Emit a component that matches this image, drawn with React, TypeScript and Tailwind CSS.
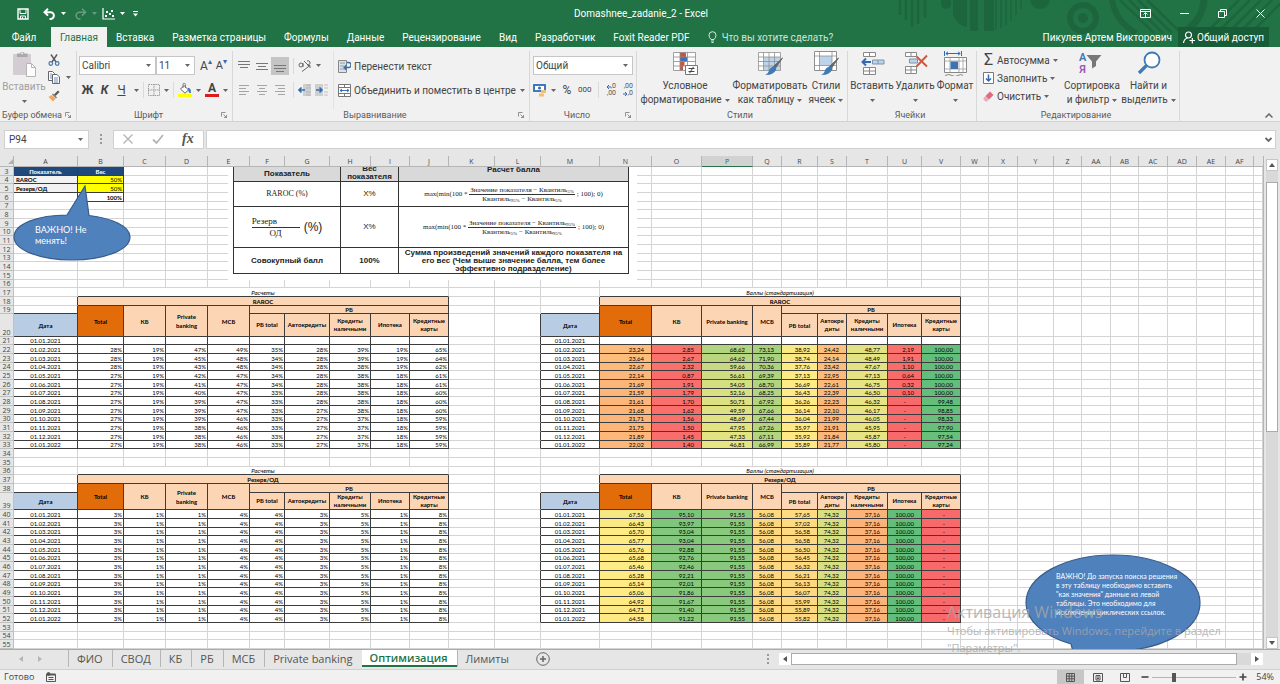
import type { ReactNode } from 'react'

const UI = "font-['Roboto','Open_Sans',sans-serif]"

/* ---------- data ---------- */

const menuTabs = [
  'Вставка',
  'Разметка страницы',
  'Формулы',
  'Данные',
  'Рецензирование',
  'Вид',
  'Разработчик',
  'Foxit Reader PDF',
]

const columns: { name: string; width: string }[] = [
  { name: 'A', width: 'w-[64px]' },
  { name: 'B', width: 'w-[46px]' },
  { name: 'C', width: 'w-[42px]' },
  { name: 'D', width: 'w-[42px]' },
  { name: 'E', width: 'w-[42px]' },
  { name: 'F', width: 'w-[35px]' },
  { name: 'G', width: 'w-[45px]' },
  { name: 'H', width: 'w-[41px]' },
  { name: 'I', width: 'w-[39px]' },
  { name: 'J', width: 'w-[39px]' },
  { name: 'K', width: 'w-[46px]' },
  { name: 'L', width: 'w-[46px]' },
  { name: 'M', width: 'w-[59px]' },
  { name: 'N', width: 'w-[52px]' },
  { name: 'O', width: 'w-[50px]' },
  { name: 'P', width: 'w-[51px]' },
  { name: 'Q', width: 'w-[29px]' },
  { name: 'R', width: 'w-[36px]' },
  { name: 'S', width: 'w-[29px]' },
  { name: 'T', width: 'w-[41px]' },
  { name: 'U', width: 'w-[34px]' },
  { name: 'V', width: 'w-[39px]' },
  { name: 'W', width: 'w-[28px]' },
  { name: 'X', width: 'w-[29px]' },
  { name: 'Y', width: 'w-[36px]' },
  { name: 'Z', width: 'w-[28px]' },
  { name: 'AA', width: 'w-[29px]' },
  { name: 'AB', width: 'w-[28px]' },
  { name: 'AC', width: 'w-[29px]' },
  { name: 'AD', width: 'w-[29px]' },
  { name: 'AE', width: 'w-[29px]' },
  { name: 'AF', width: 'w-[28px]' },
]

const dates = [
  '01.01.2021',
  '01.02.2021',
  '01.03.2021',
  '01.04.2021',
  '01.05.2021',
  '01.06.2021',
  '01.07.2021',
  '01.08.2021',
  '01.09.2021',
  '01.10.2021',
  '01.11.2021',
  '01.12.2021',
  '01.01.2022',
]

const rarocShares: number[][] = [
  [],
  [28, 19, 47, 49, 35, 28, 39, 19, 65],
  [28, 19, 45, 48, 34, 28, 39, 19, 64],
  [28, 19, 43, 48, 34, 28, 38, 19, 62],
  [27, 19, 42, 47, 34, 28, 38, 18, 61],
  [27, 19, 41, 47, 34, 28, 38, 18, 61],
  [27, 19, 40, 47, 33, 28, 38, 18, 60],
  [27, 19, 39, 47, 33, 28, 38, 18, 60],
  [27, 19, 39, 47, 33, 27, 38, 18, 60],
  [27, 19, 39, 46, 33, 27, 37, 18, 59],
  [27, 19, 38, 46, 33, 27, 37, 18, 59],
  [27, 19, 38, 46, 33, 27, 37, 18, 59],
  [27, 19, 38, 46, 33, 27, 37, 18, 59],
]

const rarocScores: number[][] = [
  [],
  [23.24, 2.85, 68.62, 73.13, 38.92, 24.42, 48.77, 2.19, 100],
  [23.64, 2.67, 64.62, 71.9, 38.74, 24.14, 48.49, 1.91, 100],
  [22.67, 2.32, 59.66, 70.36, 37.76, 23.42, 47.67, 1.1, 100],
  [22.14, 0.87, 56.61, 69.39, 37.13, 22.95, 47.13, 0.64, 100],
  [21.69, 1.91, 54.05, 68.7, 36.69, 22.61, 46.75, 0.32, 100],
  [21.59, 1.79, 52.16, 68.25, 36.43, 22.39, 46.5, 0.1, 100],
  [21.61, 1.7, 50.71, 67.92, 36.26, 22.23, 46.32, 0, 99.48],
  [21.68, 1.62, 49.59, 67.66, 36.14, 22.1, 46.17, 0, 98.85],
  [21.71, 1.56, 48.69, 67.44, 36.04, 21.99, 46.05, 0, 98.33],
  [21.75, 1.5, 47.95, 67.26, 35.97, 21.91, 45.95, 0, 97.9],
  [21.89, 1.45, 47.33, 67.11, 35.92, 21.84, 45.87, 0, 97.54],
  [22.02, 1.4, 46.81, 66.99, 35.89, 21.77, 45.8, 0, 97.24],
]

const reserveShares: number[][] = dates.map(() => [3, 1, 1, 4, 4, 3, 5, 1, 8])

const reserveTotal = [67.56, 66.43, 65.7, 65.77, 65.76, 65.68, 65.46, 65.28, 65.14, 65.06, 64.92, 64.71, 64.58]
const reserveKb = [95.1, 93.97, 93.04, 93.04, 92.88, 92.76, 92.46, 92.21, 92.01, 91.86, 91.67, 91.4, 91.22]
const reserveRb = [57.65, 57.02, 56.58, 56.58, 56.5, 56.45, 56.32, 56.21, 56.13, 56.07, 55.99, 55.89, 55.82]
const reserveScores: number[][] = dates.map((_, i) => [
  reserveTotal[i],
  reserveKb[i],
  91.55,
  56.08,
  reserveRb[i],
  74.32,
  37.16,
  100,
  0,
])

const sheets = ['ФИО', 'СВОД', 'КБ', 'РБ', 'МСБ', 'Private banking', 'Оптимизация', 'Лимиты']

/* three-colour scale: red - yellow - green */
function scaleColor(value: number, mid: number) {
  const low = [248, 105, 107]
  const middle = [255, 235, 132]
  const high = [99, 190, 123]
  const t = value < mid ? value / mid : (value - mid) / (100 - mid)
  const from = value < mid ? low : middle
  const to = value < mid ? middle : high
  const rgb = from.map((c, i) => Math.round(c + (to[i] - c) * t))
  return `rgb(${rgb.join(',')})`
}

function formatScore(value: number) {
  return value === 0 ? '-' : value.toFixed(2).replace('.', ',')
}

/* ---------- small drawings ---------- */

function Caret({ className = 'text-[#666]' }: { className?: string }) {
  return (
    <svg viewBox="0 0 5 3" className={`h-[3px] w-[5px] shrink-0 ${className}`} aria-hidden="true">
      <path d="M0 0h5L2.5 3z" fill="currentColor" />
    </svg>
  )
}

function Launcher() {
  return (
    <button aria-label="Параметры группы" className="flex size-[8px] items-center justify-center">
      <svg viewBox="0 0 6 6" className="size-[6px]" fill="none" stroke="#777" strokeWidth="0.8" aria-hidden="true">
        <path d="M0.5 4.5v-4h4M2.5 2.5l3 3M5.5 3v2.5H3" />
      </svg>
    </button>
  )
}

function Divider() {
  return <span className="h-[16px] w-px shrink-0 bg-[#dadada]" />
}

function TitlePattern() {
  return (
    <svg
      viewBox="0 0 384 47"
      className="absolute top-0 right-0 h-[47px] w-[384px]"
      fill="none"
      stroke="#1d663d"
      aria-hidden="true"
    >
      <path d="M4 0v15M10 0v20M16 0v27M22 0v24M29 0v18" strokeWidth="2.5" />
      <path d="M45 0h10v4a5 5 0 0 1-10 0z" fill="#1d663d" stroke="none" />
      <path d="M57 0h14v27q-9-1-14-12z" fill="#1d663d" stroke="none" />
      <path d="M74 0h8v31h-8zM88 0h10v31H88z" fill="#1d663d" stroke="none" />
      <path d="M95 0v30M100 0v30M105 0v28M110 0v25M115 0v21M120 0v15M125 0v9" strokeWidth="1.6" />
      <path d="M134 0h20q-2 9-10 9t-10-9z" fill="#1d663d" stroke="none" />
      <circle cx="187" cy="18" r="13" strokeWidth="6" />
      <circle cx="187" cy="18" r="5" fill="#1d663d" stroke="none" />
      <path d="M216 0q4 22 24 33" strokeWidth="6" />
      <path d="M224 0l34 33M233 0l34 33M242 0l34 33M251 0l32 31" strokeWidth="2.5" />
      <path d="M308 0q-2 22-22 33" strokeWidth="7" />
      <path d="M343 0l-33 33M354 0l-33 33M365 0l-33 33M376 0l-33 33M384 4l-29 29" strokeWidth="2.5" />
    </svg>
  )
}

function LinesIcon({ d }: { d: string }) {
  return (
    <svg viewBox="0 0 12 12" className="size-[12px]" stroke="currentColor" fill="none" aria-hidden="true">
      <path d={d} />
    </svg>
  )
}

function PasteIcon() {
  return (
    <svg viewBox="0 0 24 26" className="h-[26px] w-[24px]" aria-hidden="true">
      <rect x="1" y="3" width="18" height="21" rx="1" fill="#d3cdd3" />
      <path d="M5 2.500h3a2.500 2.500 0 0 1 4.500 0h3V6H5z" fill="#a9a9a9" />
      <circle cx="10.200" cy="2.600" r="1" fill="#f1f1f1" />
      <path d="M14.500 12.500h5l4 4v9h-9z" fill="#fdfdfd" stroke="#b5b5b5" />
      <path d="M19.500 12.500v4h4" fill="none" stroke="#b5b5b5" />
    </svg>
  )
}

function CutIcon() {
  return (
    <svg viewBox="0 0 12 12" className="size-[12px]" fill="none" aria-hidden="true">
      <path d="M3 0.500l5 7.500M9 0.500L4 8" stroke="#5a5a5a" strokeWidth="1.400" />
      <circle cx="2.800" cy="9.500" r="1.800" stroke="#4472b0" strokeWidth="1.200" />
      <circle cx="9.200" cy="9.500" r="1.800" stroke="#4472b0" strokeWidth="1.200" />
    </svg>
  )
}

function CopyIcon() {
  return (
    <svg viewBox="0 0 12 13" className="h-[13px] w-[12px]" aria-hidden="true">
      <path d="M0.500 0.500h4l2 2v7h-6z" fill="#fff" stroke="#666" />
      <path d="M4.500 3.500h4.500l2.500 2.500v6.500h-7z" fill="#fff" stroke="#666" />
      <path d="M6 7h4M6 9h4M6 11h4" stroke="#4472b0" strokeWidth="0.800" />
      <path d="M2 3h2M2 5h2M2 7h2" stroke="#4472b0" strokeWidth="0.800" />
    </svg>
  )
}

function BrushIcon() {
  return (
    <svg viewBox="0 0 12 12" className="size-[12px]" aria-hidden="true">
      <path d="M10 0.500l1.500 1.500-4 4-1.500-1.500z" fill="#555" />
      <path d="M5 3.500l4 4-1 1-4-4z" fill="#7a7a7a" />
      <path d="M3.800 5l3.800 3.800-2.600 2.700L0.500 7z" fill="#f0a860" />
    </svg>
  )
}

function BordersIcon() {
  return (
    <svg viewBox="0 0 12 12" className="size-[12px]" fill="none" aria-hidden="true">
      <path d="M0.500 0.500h11v11h-11zM6 0v12M0 6h12" stroke="#9a9a9a" strokeDasharray="1.500 0.800" />
    </svg>
  )
}

function FillIcon() {
  return (
    <svg viewBox="0 0 14 14" className="size-[14px]" aria-hidden="true">
      <path d="M6 2.500l4.500 4.500-3.500 3.200L2.500 6z" fill="#fff" stroke="#666" />
      <path d="M5 5V1.500a1.200 1.200 0 0 1 2.400 0V5" fill="none" stroke="#666" strokeWidth="0.800" />
      <path d="M10.500 5q2.500 1 1.700 5-1.700-1-1.700-5z" fill="#4472b0" stroke="#4472b0" />
      <path d="M0 11h14v3H0z" fill="#ffff00" />
    </svg>
  )
}

function OrientationIcon() {
  return (
    <svg viewBox="0 0 14 12" className="h-[12px] w-[14px]" fill="none" stroke="#666" aria-hidden="true">
      <path d="M1 5q0-2 2-2t2 2-2 2-2-2M5 3v4M6 1l4 4M9 1q2-1 3 1t-2 3" />
      <path d="M4 11.500l8-6M9.500 5.500H12V8" />
    </svg>
  )
}

function WrapIcon() {
  return (
    <svg viewBox="0 0 13 13" className="size-[13px]" fill="none" aria-hidden="true">
      <path d="M0.500 0.500h8v12h-8z" fill="#d6e3f1" stroke="#888" />
      <path d="M2 3h5M2 6h4M2 9h5" stroke="#888" strokeWidth="0.800" />
      <path d="M9 2.500h1.500a2 2 0 0 1 0 5H6.500M8.500 5L6 7.500 8.500 10" stroke="#3a6fb0" strokeWidth="1.300" />
    </svg>
  )
}

function MergeIcon() {
  return (
    <svg viewBox="0 0 13 13" className="size-[13px]" fill="none" aria-hidden="true">
      <path d="M0.500 0.500h12v12h-12z" fill="#fff" stroke="#777" />
      <path d="M0.500 3.500h12M0.500 9.500h12M6.500 0.500v3M6.500 9.500v3" stroke="#777" />
      <path d="M2 6.500h9M4 5L2 6.500 4 8M9 5l2 1.500L9 8" stroke="#3a6fb0" />
    </svg>
  )
}

function IndentIcon({ flip = false }: { flip?: boolean }) {
  return (
    <svg viewBox="0 0 13 12" className="h-[12px] w-[13px]" fill="none" aria-hidden="true">
      <rect x={flip ? 0 : 5} y="0" width="8" height="12" fill="#cfcfcf" />
      <path d={flip ? 'M1 6h6M4.500 3.500L7 6 4.500 8.500' : 'M7 6H1M3.500 3.500L1 6l2.500 2.500'} stroke="#2f6cb3" strokeWidth="1.600" />
      <path d={flip ? 'M9 1h4M9 4h4M9 8h4M9 11h4' : 'M8 1h5M8 4h5M8 8h5M8 11h5'} stroke="#aaa" strokeWidth="0.700" />
    </svg>
  )
}

function MoneyIcon() {
  return (
    <svg viewBox="0 0 14 13" className="h-[13px] w-[14px]" fill="none" aria-hidden="true">
      <rect x="1" y="1" width="11" height="6" fill="#fff" stroke="#2f6cb3" strokeWidth="1.800" />
      <circle cx="6.500" cy="4" r="1.500" fill="#2f6cb3" />
      <path d="M8 6h5v3H8zM6 9.500h5v3H6z" fill="#f2c078" />
    </svg>
  )
}

function DecimalArrow({ d }: { d: string }) {
  return (
    <svg viewBox="0 0 5 4" className="h-[4px] w-[5px]" fill="none" stroke="#2f6cb3" aria-hidden="true">
      <path d={d} />
    </svg>
  )
}

function DecimalIcon({ grow = false }: { grow?: boolean }) {
  return (
    <span className="flex flex-col items-end text-[7px] leading-[7px] text-[#555]">
      <span className="flex items-center">
        {grow && <DecimalArrow d="M5 2H1M3 0L1 2l2 2" />}
        {grow ? ',0' : ',00'}
      </span>
      <span className="flex items-center">
        {!grow && <DecimalArrow d="M0 2h4M2 0l2 2-2 2" />}
        {grow ? ',00' : ',0'}
      </span>
    </span>
  )
}

function ConditionalIcon() {
  return (
    <svg viewBox="0 0 26 25" className="h-[25px] w-[26px]" fill="none" aria-hidden="true">
      <path d="M1.500 1.500h22v18h-22z" fill="#fff" />
      <path d="M8 1.500h6v4.500H8zM8 10.500h4.500V15H8zM8 15h3v4.500H8z" fill="#d0513c" />
      <path d="M8 6h7v4.500H8z" fill="#3f72b0" />
      <path d="M1.500 1.500h22v18h-22zM1.500 6h22M1.500 10.500h22M1.500 15h22M8 1.500v18M15.500 1.500v18" stroke="#8a8a8a" strokeWidth="0.800" />
      <path d="M13.500 14.500h12v9h-12z" fill="#fff" stroke="#777" />
      <path d="M16.500 17.500h6M16.500 20.500h6M21.500 15.800l-4 6.500" stroke="#444" />
    </svg>
  )
}

function StyleBrush() {
  return (
    <>
      <path d="M25.500 7l-7 10-2-1.500z" fill="#666" stroke="#666" />
      <path d="M17 15.500q3 1 2 3.500-3 5.500-11 5 3.500-1.500 4-5 2-3.500 5-3.500z" fill="#3f7ab8" />
    </>
  )
}

function FormatTableIcon() {
  return (
    <svg viewBox="0 0 26 25" className="h-[25px] w-[26px]" fill="none" aria-hidden="true">
      <path d="M1.500 1.500h22v18h-22z" fill="#fff" />
      <path d="M6.500 6h17v13.500h-17z" fill="#bcd3ea" />
      <path d="M1.500 1.500h22v18h-22zM1.500 6h22M1.500 10.500h22M1.500 15h22M6.500 1.500v18M12 1.500v18M17.500 1.500v18" stroke="#8f8f8f" strokeWidth="0.800" />
      <StyleBrush />
    </svg>
  )
}

function CellStylesIcon() {
  return (
    <svg viewBox="0 0 26 25" className="h-[25px] w-[26px]" fill="none" aria-hidden="true">
      <path d="M1.500 0.500h22v19h-22z" fill="#fff" stroke="#8f8f8f" />
      <path d="M6.500 5h12.500v9.500H6.500z" fill="#bcd3ea" />
      <path d="M1.500 5h22M1.500 14.500h22M6.500 0.500v19M19 0.500v19" stroke="#8f8f8f" strokeWidth="0.800" />
      <StyleBrush />
    </svg>
  )
}

function InsertCellsIcon() {
  return (
    <svg viewBox="0 0 26 25" className="h-[25px] w-[26px]" fill="none" aria-hidden="true">
      <path d="M4.500 1.500h12v4h-12zM10.500 1.500v4M4.500 16.500h12v7h-12zM10.500 16.500v7M4.500 20h12" fill="#fff" stroke="#888" />
      <path d="M13.500 9h11.500v4H13.500zM19 9v4" fill="#bcd3ea" stroke="#7f93a8" />
      <path d="M12 11H3.500M7 7.500L3.500 11 7 14.500" stroke="#2f6cb3" strokeWidth="2" />
    </svg>
  )
}

function DeleteCellsIcon() {
  return (
    <svg viewBox="0 0 26 25" className="h-[25px] w-[26px]" fill="none" aria-hidden="true">
      <path d="M3.500 1.500h11v4h-11zM9 1.500v4M3.500 15.500h11v7h-11zM9 15.500v7M3.500 19h11" fill="#fff" stroke="#888" />
      <path d="M7.500 8h8v4h-8z" fill="#bcd3ea" stroke="#7f93a8" />
      <path d="M14.500 5.500l10.500 10M25 4.500l-10.500 11" stroke="#d4573e" strokeWidth="2" />
    </svg>
  )
}

function FormatCellsIcon() {
  return (
    <svg viewBox="0 0 26 25" className="h-[25px] w-[26px]" fill="none" aria-hidden="true">
      <path d="M2.500 0v5M19.500 0v5M4 2.500h14M6 0.800L3.800 2.500 6 4.200M16 0.800l2.200 1.700L16 4.200" stroke="#2f6cb3" />
      <path d="M2.500 6.500h22v15h-22z" fill="#fff" stroke="#888" />
      <path d="M2.500 10h22M2.500 18h22M8 6.500v15M17 6.500v15M21 6.500v15" stroke="#999" strokeWidth="0.800" />
      <path d="M8.500 10.500h7.500v7.500H8.500z" fill="#3f72b0" />
      <path d="M3 24.500q4-2 7 0t6 0 5 0" stroke="#888" />
    </svg>
  )
}

function SortIcon() {
  return (
    <span className="flex h-[25px] w-[26px] items-center">
      <span className="flex flex-col text-[11px] leading-[12px] font-semibold">
        <span className="text-[#3f72b0]">А</span>
        <span className="text-[#9a57b5]">Я</span>
      </span>
      <svg viewBox="0 0 16 15" className="mb-1 h-[15px] w-[16px]" aria-hidden="true">
        <path d="M0.500 1h15L10 7.500V12l-4 2.500v-7z" fill="#777" />
      </svg>
    </span>
  )
}

function FindIcon() {
  return (
    <svg viewBox="0 0 26 25" className="h-[25px] w-[26px]" fill="none" aria-hidden="true">
      <circle cx="16" cy="9" r="7.500" fill="#fff" stroke="#3f7ab8" strokeWidth="1.800" />
      <path d="M10.500 14.500L3 22" stroke="#3f7ab8" strokeWidth="3.200" />
    </svg>
  )
}

/* ---------- ribbon ---------- */

function Group({
  label,
  width,
  launcher = false,
  children,
}: {
  label: string
  width: string
  launcher?: boolean
  children: ReactNode
}) {
  return (
    <section aria-label={label} className={`flex shrink-0 flex-col pt-[4px] ${width}`}>
      <div className="flex flex-1 border-r border-[#d8d8d8]">{children}</div>
      <div className="flex h-[12px] items-center border-r border-[#d8d8d8] pr-1 text-[9px] leading-[12px] text-[#5c5c5c]">
        <span className="flex-1 text-center whitespace-nowrap">{label}</span>
        {launcher && <Launcher />}
      </div>
    </section>
  )
}

function BigButton({
  icon,
  lines,
  width,
  className = 'text-[#444]',
}: {
  icon: ReactNode
  lines: string[]
  width: string
  className?: string
}) {
  return (
    <button
      className={`flex flex-col items-center self-start text-[10px] leading-[14px] whitespace-nowrap ${width} ${className}`}
    >
      {icon}
      <span className="mt-[3px]">{lines[0]}</span>
      <span className="flex h-[14px] items-center gap-[3px]">
        {lines[1]}
        <Caret />
      </span>
    </button>
  )
}

function Combo({ label, value, width }: { label: string; value: string; width: string }) {
  return (
    <span className={`flex h-[19px] items-center border border-[#c6c6c6] bg-white pr-1 ${width}`}>
      <select
        aria-label={label}
        defaultValue={value}
        className="min-w-0 flex-1 appearance-none bg-transparent pl-[2px] text-[10px] text-[#444] outline-none"
      >
        <option>{value}</option>
      </select>
      <Caret />
    </span>
  )
}

function SmallButton({ icon, label, caret = true }: { icon: ReactNode; label: string; caret?: boolean }) {
  return (
    <button className="flex h-[18px] items-center gap-[3px] text-[10px] whitespace-nowrap text-[#444]">
      {icon}
      {label}
      {caret && <Caret />}
    </button>
  )
}

function Ribbon() {
  return (
    <div className="flex h-[75px] border-b border-[#d2d2d2] bg-[#f1f1f1]">
      <Group label="Буфер обмена" width="w-[77px]" launcher>
        <BigButton icon={<PasteIcon />} lines={['Вставить', '']} width="w-[48px]" className="text-[#a0a0a0]" />
        <div className="flex flex-col gap-[5px] pt-[2px]">
          <button aria-label="Вырезать" className="flex h-[13px] items-center">
            <CutIcon />
          </button>
          <button aria-label="Копировать" className="flex h-[13px] items-center gap-[6px]">
            <CopyIcon />
            <Caret />
          </button>
          <button aria-label="Формат по образцу" className="flex h-[13px] items-center">
            <BrushIcon />
          </button>
        </div>
      </Group>

      <Group label="Шрифт" width="w-[156px]" launcher>
        <div className="flex flex-1 flex-col gap-[5px] pt-[5px] pl-[2px]">
          <div className="flex items-center">
            <Combo label="Шрифт" value="Calibri" width="w-[77px]" />
            <Combo label="Размер шрифта" value="11" width="w-[39px]" />
            <button aria-label="Увеличить размер" className="ml-[5px] flex text-[12px] leading-[14px] text-[#444]">
              A<span className="text-[8px] leading-[6px] text-[#2f6cb3]">▴</span>
            </button>
            <button aria-label="Уменьшить размер" className="ml-[4px] flex text-[11px] leading-[14px] text-[#444]">
              A<span className="text-[8px] leading-[6px] text-[#2f6cb3]">▾</span>
            </button>
          </div>
          <div className="flex h-[20px] items-center gap-[4px] text-[12px] text-[#444]">
            <span className="flex">
              <button className="w-[17px] font-bold">Ж</button>
              <button className="w-[17px] font-bold italic">К</button>
              <button className="w-[17px] underline">Ч</button>
            </span>
            <Caret />
            <Divider />
            <button aria-label="Границы">
              <BordersIcon />
            </button>
            <Caret />
            <Divider />
            <button aria-label="Цвет заливки">
              <FillIcon />
            </button>
            <Caret />
            <button
              aria-label="Цвет текста"
              className="flex h-[14px] w-[14px] flex-col items-center border-b-[3px] border-[#e01b1b] leading-[11px] font-bold"
            >
              A
            </button>
            <Caret />
          </div>
        </div>
      </Group>

      <Group label="Выравнивание" width="w-[297px]" launcher>
        <div className="flex flex-col gap-[5px] pt-[5px] pl-[2px] text-[#777]">
          <div className="flex h-[19px] items-center">
            <button aria-label="По верхнему краю" className="px-[3px]">
              <LinesIcon d="M0 1.500h12M0 4.500h12M2 7.500h8" />
            </button>
            <button aria-label="По середине" className="px-[3px]">
              <LinesIcon d="M0 3.500h12M2 6.500h8M0 9.500h12" />
            </button>
            <button aria-label="По нижнему краю" className="bg-[#c5c5c5] px-[3px] py-[3px]">
              <LinesIcon d="M0 5.500h12M0 8.500h12M2 11.500h8" />
            </button>
            <span className="mx-[4px] flex">
              <Divider />
            </span>
            <button aria-label="Ориентация" className="flex items-center gap-[4px]">
              <OrientationIcon />
              <Caret />
            </button>
          </div>
          <div className="flex h-[19px] items-center">
            <button aria-label="По левому краю" className="px-[3px] text-[#a5a5a5]">
              <LinesIcon d="M1 1.500h10M1 4.500h7M1 7.500h10M1 10.500h7" />
            </button>
            <button aria-label="По центру" className="px-[3px] text-[#a5a5a5]">
              <LinesIcon d="M1 1.500h10M3 4.500h6M1 7.500h10M3 10.500h6" />
            </button>
            <button aria-label="По правому краю" className="px-[3px] text-[#a5a5a5]">
              <LinesIcon d="M1 1.500h10M4 4.500h7M1 7.500h10M4 10.500h7" />
            </button>
            <span className="mx-[4px] flex">
              <Divider />
            </span>
            <button aria-label="Уменьшить отступ">
              <IndentIcon />
            </button>
            <button aria-label="Увеличить отступ" className="ml-[4px]">
              <IndentIcon flip />
            </button>
          </div>
        </div>
        <div className="ml-[5px] flex flex-1 flex-col gap-[6px] border-l border-[#e2e2e2] pt-[6px] pr-[4px] pl-[4px]">
          <SmallButton icon={<WrapIcon />} label="Перенести текст" caret={false} />
          <button className="flex h-[18px] items-center gap-[3px] text-[10px] whitespace-nowrap text-[#444]">
            <MergeIcon />
            <span className="flex-1 text-left">Объединить и поместить в центре</span>
            <Caret />
          </button>
        </div>
      </Group>

      <Group label="Число" width="w-[107px]" launcher>
        <div className="flex flex-1 flex-col gap-[5px] px-[3px] pt-[5px]">
          <Combo label="Числовой формат" value="Общий" width="w-full" />
          <div className="flex h-[20px] items-center justify-between text-[#444]">
            <button aria-label="Финансовый формат" className="flex items-center gap-[4px]">
              <MoneyIcon />
              <Caret />
            </button>
            <button className="text-[12px]">%</button>
            <button className="text-[8px]">000</button>
            <Divider />
            <button aria-label="Увеличить разрядность">
              <DecimalIcon grow />
            </button>
            <button aria-label="Уменьшить разрядность">
              <DecimalIcon />
            </button>
          </div>
        </div>
      </Group>

      <Group label="Стили" width="w-[211px]">
        <BigButton icon={<ConditionalIcon />} lines={['Условное', 'форматирование']} width="w-[96px]" />
        <BigButton icon={<FormatTableIcon />} lines={['Форматировать', 'как таблицу']} width="w-[74px]" />
        <BigButton icon={<CellStylesIcon />} lines={['Стили', 'ячеек']} width="w-[38px]" />
      </Group>

      <Group label="Ячейки" width="w-[129px]">
        <BigButton icon={<InsertCellsIcon />} lines={['Вставить', '']} width="w-[48px]" />
        <BigButton icon={<DeleteCellsIcon />} lines={['Удалить', '']} width="w-[38px]" />
        <BigButton icon={<FormatCellsIcon />} lines={['Формат', '']} width="w-[42px]" />
      </Group>

      <Group label="Редактирование" width="w-[203px]">
        <div className="flex w-[87px] flex-col pl-[6px]">
          <SmallButton icon={<span className="w-[11px] text-[16px] leading-[16px]">Σ</span>} label="Автосумма" />
          <SmallButton
            icon={
              <svg viewBox="0 0 11 12" className="h-[12px] w-[11px]" fill="none" aria-hidden="true">
                <path d="M0.500 0.500h10v11h-10z" fill="#fff" stroke="#777" />
                <path d="M5.500 2.500v6.500M3 6.500L5.500 9 8 6.500" stroke="#2f6cb3" strokeWidth="1.500" />
              </svg>
            }
            label="Заполнить"
          />
          <SmallButton
            icon={
              <svg viewBox="0 0 11 11" className="size-[11px]" aria-hidden="true">
                <path d="M7 0.500L10.500 4 6 8.500 2.500 5z" fill="#e0697f" />
                <path d="M2.500 5L6 8.500 4 10.500H2.500L0.500 8.500V7z" fill="#f0a9b5" />
              </svg>
            }
            label="Очистить"
          />
        </div>
        <BigButton icon={<SortIcon />} lines={['Сортировка', 'и фильтр']} width="w-[56px]" />
        <BigButton icon={<FindIcon />} lines={['Найти и', 'выделить']} width="w-[57px]" />
      </Group>

      <div className="flex flex-1 items-end justify-end pr-[7px] pb-[3px]">
        <button aria-label="Свернуть ленту">
          <svg viewBox="0 0 8 5" className="h-[5px] w-[8px]" fill="none" stroke="#666" strokeWidth="1.500" aria-hidden="true">
            <path d="M0.500 4.500L4 1l3.500 3.500" />
          </svg>
        </button>
      </div>
    </div>
  )
}

/* ---------- title and menu ---------- */

function TitleBar() {
  return (
    <header className="relative bg-[#217346] text-white">
      <TitlePattern />
      <div className="relative flex h-[27px] items-center">
        <div className="flex flex-1 items-center pl-[17px]">
          <button aria-label="Сохранить" className="mr-[14px]">
            <svg viewBox="0 0 12 12" className="size-[12px]" fill="none" stroke="#fff" aria-hidden="true">
              <path d="M1 1h10v10H1z" strokeWidth="1.400" />
              <path d="M3 1v4.500h6V1M3.500 11V8h5v3M5.500 9v2" />
            </svg>
          </button>
          <button aria-label="Отменить" className="flex items-center gap-[5px]">
            <svg viewBox="0 0 13 12" className="h-[12px] w-[13px]" fill="none" stroke="#fff" strokeWidth="2" aria-hidden="true">
              <path d="M5 0.800L1.500 4.200 5 7.600M2 4.200h5.500a3.300 3.300 0 0 1 0 6.800H6.500" />
            </svg>
            <Caret className="text-white" />
          </button>
          <button aria-label="Вернуть" className="ml-[8px] flex items-center gap-[5px] opacity-30">
            <svg viewBox="0 0 13 12" className="h-[12px] w-[13px]" fill="none" stroke="#fff" strokeWidth="1.600" aria-hidden="true">
              <path d="M8 0.800l3.500 3.400L8 7.600M11 4.200H5.500a3.300 3.300 0 0 0 0 6.800h1" />
            </svg>
            <Caret className="text-white" />
          </button>
          <button aria-label="Точечная диаграмма" className="ml-[5px] flex items-center gap-[5px]">
            <svg viewBox="0 0 13 12" className="h-[12px] w-[13px]" fill="none" aria-hidden="true">
              <path d="M1 0v11h12" stroke="#fff" strokeWidth="1.200" />
              <path d="M3 7h2v2H3zM4 3h2v2H4zM7 5h2v2H7zM9 2h2v2H9zM10 7h2v2h-2z" fill="#fff" />
            </svg>
            <Caret className="text-white" />
          </button>
          <button aria-label="Настройка панели" className="ml-[8px]">
            <svg viewBox="0 0 5 6" className="h-[6px] w-[5px]" fill="#fff" aria-hidden="true">
              <path d="M0 0h5v1H0zM0 2.500h5L2.500 5.500z" />
            </svg>
          </button>
        </div>
        <h1 className="text-[10px]">Domashnee_zadanie_2 - Excel</h1>
        <div className="flex flex-1 items-center justify-end gap-[29px] pr-[15px]">
          <button aria-label="Параметры отображения ленты">
            <svg viewBox="0 0 11 9" className="h-[9px] w-[11px]" fill="none" stroke="#fff" aria-hidden="true">
              <path d="M0.500 0.500h10v8h-10zM0.500 2.500h10M5.500 8V4M3.500 5.500l2-2 2 2" />
            </svg>
          </button>
          <button aria-label="Свернуть">
            <svg viewBox="0 0 9 9" className="size-[9px]" stroke="#fff" aria-hidden="true">
              <path d="M0 4.500h9" />
            </svg>
          </button>
          <button aria-label="Свернуть в окно">
            <svg viewBox="0 0 9 9" className="size-[9px]" fill="none" stroke="#fff" aria-hidden="true">
              <path d="M0.500 2.500h6v6h-6zM2.500 2.500v-2h6v6h-2" />
            </svg>
          </button>
          <button aria-label="Закрыть">
            <svg viewBox="0 0 9 9" className="size-[9px]" stroke="#fff" aria-hidden="true">
              <path d="M0.500 0.500l8 8M8.500 0.500l-8 8" />
            </svg>
          </button>
        </div>
      </div>

      <nav className="relative flex h-[20px] items-stretch text-[10px] whitespace-nowrap">
        <button className="w-[51px] pr-[3px]">Файл</button>
        <button className="w-[56px] bg-[#f1f1f1] text-[#217346]">Главная</button>
        {menuTabs.map((tab) => (
          <button key={tab} className="px-[9px]">
            {tab}
          </button>
        ))}
        <button className="flex items-center gap-[5px] pl-[9px] text-[#cfe3d7]">
          <svg viewBox="0 0 9 12" className="h-[12px] w-[9px]" fill="none" stroke="#d7e8de" aria-hidden="true">
            <path d="M3 8.500Q1 6.500 1 4.200a3.500 3.500 0 0 1 7 0Q8 6.500 6 8.500zM3 10h3M3.500 11.500h2" />
          </svg>
          Что вы хотите сделать?
        </button>
        <div className="flex flex-1 items-stretch justify-end pr-[11px]">
          <span className="flex items-center pr-[6px]">Пикулев Артем Викторович</span>
          <button className="flex items-center gap-[2px] bg-[#185c37] pr-[5px] pl-[5px]">
            <svg viewBox="0 0 12 13" className="h-[13px] w-[12px]" fill="none" stroke="#fff" strokeWidth="1.200" aria-hidden="true">
              <circle cx="5.500" cy="4" r="3" />
              <path d="M0.500 12q0.500-4 4-5M6.500 9.500h5.500M9.300 7v5.500" />
            </svg>
            Общий доступ
          </button>
        </div>
      </nav>
    </header>
  )
}

function FormulaBar() {
  return (
    <div className="flex h-[34px] items-center bg-[#e6e6e6] px-[4px]">
      <span className="flex h-[19px] w-[85px] items-center border border-[#d0d0d0] bg-white pr-[5px]">
        <input aria-label="Имя ячейки" defaultValue="P94" className="min-w-0 flex-1 pl-[4px] text-[10px] text-[#444] outline-none" />
        <Caret />
      </span>
      <svg viewBox="0 0 2 10" className="mx-[11px] h-[10px] w-[2px]" fill="#999" aria-hidden="true">
        <path d="M0 0h2v2H0zM0 4h2v2H0zM0 8h2v2H0z" />
      </svg>
      <span className="mr-[2px] flex h-[19px] w-[91px] items-center justify-around border border-[#d0d0d0] bg-white">
        <button aria-label="Отмена">
          <svg viewBox="0 0 10 10" className="size-[10px]" stroke="#b5b5b5" strokeWidth="1.400" aria-hidden="true">
            <path d="M0.500 0.500l9 9M9.500 0.500l-9 9" />
          </svg>
        </button>
        <button aria-label="Ввод">
          <svg viewBox="0 0 12 10" className="h-[10px] w-[12px]" fill="none" stroke="#b5b5b5" strokeWidth="1.800" aria-hidden="true">
            <path d="M1 5.500L4.500 9 11 1" />
          </svg>
        </button>
        <button className="font-['Liberation_Serif',serif] text-[14px] leading-[14px] font-bold text-[#555] italic">fx</button>
      </span>
      <span className="flex h-[19px] flex-1 items-center border border-[#d0d0d0] bg-white pr-[3px]">
        <input aria-label="Строка формул" className="min-w-0 flex-1 px-1 text-[10px] outline-none" />
        <svg viewBox="0 0 7 5" className="h-[5px] w-[7px]" fill="none" stroke="#666" strokeWidth="1.800" aria-hidden="true">
          <path d="M0.500 1l3 3 3-3" />
        </svg>
      </span>
    </div>
  )
}

/* ---------- sheet ---------- */

const CELL = 'border-r border-b border-[#d4d4d4]'
const BOXED = 'border-r border-b border-[#3c3c3c]'
const HEAD = `${BOXED} text-center font-bold`
const PEACH = `${HEAD} bg-[#fcd5b4]`
const ORANGE = `${HEAD} bg-[#e26b0a]`
const BLUE = `${HEAD} bg-[#b8cce4]`

// closed: the last cell of the run touches a framed table on its right
function Blank({ n = 1, closed = false }: { n?: number; closed?: boolean }) {
  return (
    <>
      {Array.from({ length: n }, (_, i) => (
        <td key={i} className={closed && i === n - 1 ? `${CELL} border-r-[#3c3c3c]` : CELL} />
      ))}
    </>
  )
}

function EmptyBoxed({ n }: { n: number }) {
  return (
    <>
      {Array.from({ length: n }, (_, i) => (
        <td key={i} className={BOXED} />
      ))}
    </>
  )
}

function Row({ n, height, children }: { n: number; height?: string; children: ReactNode }) {
  // rows are 8 2/3 px tall at this zoom, so every third one is a pixel shorter
  const short = n < 20 ? n % 3 === 1 : n % 3 === 0
  return (
    <tr className={height ?? (short ? 'h-[8px]' : 'h-[9px]')}>
      <th
        scope="row"
        className="border-r border-b border-[#c0c0c0] bg-[#e6e6e6] align-bottom font-['Open_Sans',sans-serif] text-[7px] font-normal text-[#444]"
      >
        {n}
      </th>
      {children}
    </tr>
  )
}

function TableHead({ start, title, tall }: { start: number; title: string; tall: string }) {
  const rest = ['Кредиты наличными', 'Ипотека', 'Кредитные карты']
  return (
    <>
      <Row n={start}>
        <Blank />
        <td colSpan={9} className={`${CELL} border-b-[#3c3c3c] text-center italic`}>
          Расчеты
        </td>
        <Blank n={3} />
        <td colSpan={9} className={`${CELL} border-b-[#3c3c3c] text-center italic`}>
          Баллы (стандартизация)
        </td>
        <Blank n={11} />
      </Row>
      <Row n={start + 1}>
        <Blank closed />
        <th colSpan={9} className={PEACH}>
          {title}
        </th>
        <Blank n={3} closed />
        <th colSpan={9} className={PEACH}>
          {title}
        </th>
        <Blank n={11} />
      </Row>
      <Row n={start + 2}>
        <EmptyBoxed n={1} />
        <th rowSpan={2} className={ORANGE}>
          Total
        </th>
        <th rowSpan={2} className={PEACH}>
          КБ
        </th>
        <th rowSpan={2} className={`${PEACH} leading-[9px]`}>
          Private
          <br />
          banking
        </th>
        <th rowSpan={2} className={PEACH}>
          МСБ
        </th>
        <th colSpan={5} className={PEACH}>
          РБ
        </th>
        <Blank n={2} />
        <EmptyBoxed n={1} />
        <th rowSpan={2} className={ORANGE}>
          Total
        </th>
        <th rowSpan={2} className={PEACH}>
          КБ
        </th>
        <th rowSpan={2} className={`${PEACH} whitespace-nowrap`}>
          Private banking
        </th>
        <th rowSpan={2} className={PEACH}>
          МСБ
        </th>
        <th colSpan={5} className={PEACH}>
          РБ
        </th>
        <Blank n={11} />
      </Row>
      <Row n={start + 3} height={tall}>
        <th className={BLUE}>Дата</th>
        {['РБ total', 'Автокредиты', ...rest].map((h) => (
          <th key={h} className={`${PEACH} leading-[8px]`}>
            {h}
          </th>
        ))}
        <Blank n={2} closed />
        <th className={BLUE}>Дата</th>
        <th className={PEACH}>РБ total</th>
        <th className={`${PEACH} leading-[8px]`}>
          Автокре
          <br />
          диты
        </th>
        {rest.map((h) => (
          <th key={h} className={`${PEACH} leading-[8px]`}>
            {h}
          </th>
        ))}
        <Blank n={11} />
      </Row>
    </>
  )
}

function TableRows({
  start,
  shares,
  scores,
  mid,
}: {
  start: number
  shares: number[][]
  scores: number[][]
  mid: number
}) {
  return (
    <>
      {dates.map((date, i) => (
        <Row key={date} n={start + i}>
          <td className={`${BOXED} text-center`}>{date}</td>
          {shares[i].length === 0 && <EmptyBoxed n={9} />}
          {shares[i].map((v, c) => (
            <td key={c} className={`${BOXED} pr-px text-right`}>
              {v}%
            </td>
          ))}
          <Blank n={2} closed />
          <td className={`${BOXED} text-center`}>{date}</td>
          {scores[i].length === 0 && <EmptyBoxed n={9} />}
          {scores[i].map((v, c) => (
            <td
              key={c}
              className={`${BOXED} text-right ${v === 0 ? 'pr-[15px]' : 'pr-[7px]'}`}
              style={{ backgroundColor: scaleColor(v, mid) }}
            >
              {formatScore(v)}
            </td>
          ))}
          <Blank n={11} />
        </Row>
      ))}
    </>
  )
}

function EmptyRows({ from, to }: { from: number; to: number }) {
  return (
    <>
      {Array.from({ length: to - from + 1 }, (_, i) => (
        <Row key={i} n={from + i}>
          <Blank n={33} />
        </Row>
      ))}
    </>
  )
}

function Fraction({ top, bottom }: { top: ReactNode; bottom: ReactNode }) {
  return (
    <span className="flex flex-col items-center">
      <span className="border-b border-[#333] px-px">{top}</span>
      <span>{bottom}</span>
    </span>
  )
}

function Quantile({ p }: { p: string }) {
  return (
    <>
      Квантиль<sub className="text-[5px] leading-[5px]">{p}</sub>
    </>
  )
}

function Formula({ a, top, b }: { a: string; top: string; b: string }) {
  return (
    <span className="flex items-center justify-center font-['Liberation_Serif',serif] text-[7px] leading-[8px] font-normal whitespace-nowrap">
      max(min(100 *&nbsp;
      <Fraction
        top={
          <>
            Значение показателя − <Quantile p={top} />
          </>
        }
        bottom={
          <>
            <Quantile p={a} /> − <Quantile p={b} />
          </>
        }
      />
      &nbsp;; 100); 0)
    </span>
  )
}

function ScoringPicture() {
  const cell = 'border-r border-b border-[#333]'
  return (
    <div className="absolute top-[11px] left-[228px] h-[113px] w-[409px] bg-white pl-[5px]">
      <table className="w-[396px] table-fixed border-separate border-spacing-0 border-l border-[#333] text-center font-['Liberation_Sans',sans-serif] text-[8px] leading-[8px] text-[#222]">
        <colgroup>
          <col className="w-[107px]" />
          <col className="w-[58px]" />
          <col />
        </colgroup>
        <thead>
          <tr className="h-[15px] bg-[#d9d9d9]">
            <th className={cell}>Показатель</th>
            <th className={cell}>
              <span className="flex h-[14px] items-end justify-center overflow-hidden">
                <span>
                  Вес
                  <br />
                  показателя
                </span>
              </span>
            </th>
            <th className={`${cell} align-top`}>
              <span className="flex h-[7px] items-end justify-center overflow-hidden">Расчет балла</span>
            </th>
          </tr>
        </thead>
        <tbody>
          <tr className="h-[25px]">
            <td className={`${cell} font-['Liberation_Serif',serif]`}>RAROC (%)</td>
            <td className={cell}>X%</td>
            <td className={cell}>
              <Formula a="95%" top="5%" b="5%" />
            </td>
          </tr>
          <tr className="h-[41px]">
            <td className={cell}>
              <span className="flex items-center justify-center gap-1 font-['Liberation_Serif',serif] text-[9px] leading-[11px]">
                <span className="flex w-[48px] flex-col">
                  <span className="border-b border-[#333] text-left">Резерв</span>
                  <span>ОД</span>
                </span>
                <span className="font-['Liberation_Sans',sans-serif] text-[12px]">(%)</span>
              </span>
            </td>
            <td className={cell}>X%</td>
            <td className={cell}>
              <Formula a="5%" top="95%" b="95%" />
            </td>
          </tr>
          <tr className="h-[26px] font-bold">
            <td className={cell}>Совокупный балл</td>
            <td className={cell}>100%</td>
            <td className={cell}>
              Сумма произведений значений каждого показателя на
              <br />
              его вес (Чем выше значение балла, тем более
              <br />
              эффективно подразделение)
            </td>
          </tr>
        </tbody>
      </table>
    </div>
  )
}

function Callouts() {
  return (
    <>
      <div className="absolute top-[29px] left-[13px] h-[76px] w-[118px] text-white">
        <svg viewBox="0 0 118 76" className="absolute inset-0 h-[76px] w-[118px]" aria-hidden="true">
          <path
            d="M54 30L72 1l4 29.500C98 33 117 41 117 52c0 13-26 23-58 23S1 65 1 52s24-22 53-22z"
            fill="#4f81bd"
            stroke="#385d8a"
            strokeWidth="1.200"
          />
        </svg>
        <p className="relative pt-[39px] pl-[22px] text-[9px] leading-[11px]">
          ВАЖНО! Не
          <br />
          менять!
        </p>
      </div>
      <div className="absolute top-[398px] left-[1025px] h-[120px] w-[176px] text-white">
        <svg viewBox="0 0 176 120" className="absolute inset-0 h-[120px] w-[176px]" aria-hidden="true">
          <path
            d="M46 90C18 82 1 66 1 49 1 22 40 1 88 1s87 21 87 48-39 48-87 48q-8 0-16-1l-18 24z"
            fill="#4f81bd"
            stroke="#385d8a"
            strokeWidth="1.200"
          />
        </svg>
        <p className="relative pt-[18px] pl-[31px] text-[7px] leading-[9px] whitespace-nowrap">
          ВАЖНО! До запуска поиска решения
          <br />
          в эту таблицу необходимо вставить
          <br />
          "как значения" данные из левой
          <br />
          таблицы. Это необходимо для
          <br />
          исключения циклических ссылок.
        </p>
      </div>
    </>
  )
}

function Sheet() {
  return (
    <div className="flex bg-[#e6e6e6]">
      <div className="relative min-w-0 flex-1 overflow-hidden font-['Lato','Open_Sans',sans-serif]">
        <table className="w-full table-fixed border-separate border-spacing-0 bg-white text-[6px] leading-[7px] text-black">
          <colgroup>
            <col className="w-[14px]" />
            {columns.map((c) => (
              <col key={c.name} className={c.width} />
            ))}
            <col />
          </colgroup>
          <thead>
            <tr className="h-[11px] bg-[#e6e6e6]">
              <td className="border-r border-b border-[#b5b5b5]">
                <svg viewBox="0 0 6 6" className="ml-auto size-[5px]" aria-hidden="true">
                  <path d="M6 0v6H0z" fill="#b0b0b0" />
                </svg>
              </td>
              {columns.map((c) => (
                <th
                  key={c.name}
                  scope="col"
                  className={`border-r border-b font-['Open_Sans',sans-serif] text-[7px] font-normal ${
                    c.name === 'P'
                      ? 'border-r-[#b5b5b5] border-b-[#217346] bg-[#d2d2d2] text-[#217346]'
                      : 'border-[#b5b5b5] text-[#444]'
                  }`}
                >
                  {c.name}
                </th>
              ))}
              <td className="border-b border-[#b5b5b5]" />
            </tr>
          </thead>
          <tbody>
            <Row n={3}>
              <th className={`${BOXED} bg-[#1f497d] text-white`}>Показатель</th>
              <th className={`${BOXED} bg-[#1f497d] text-white`}>Вес</th>
              <Blank n={31} />
            </Row>
            <Row n={4}>
              <th className={`${BOXED} bg-[#f2f2f2] pl-[2px] text-left`}>RAROC</th>
              <td className={`${BOXED} bg-[#ffff00] pr-px text-right`}>50%</td>
              <Blank n={31} />
            </Row>
            <Row n={5}>
              <th className={`${BOXED} bg-[#f2f2f2] pl-[2px] text-left`}>Резерв/ОД</th>
              <td className={`${BOXED} bg-[#ffff00] pr-px text-right`}>50%</td>
              <Blank n={31} />
            </Row>
            <Row n={6}>
              <Blank closed />
              <td className={`${BOXED} pr-px text-right font-bold`}>100%</td>
              <Blank n={31} />
            </Row>
            <EmptyRows from={7} to={16} />
            <TableHead start={17} title="RAROC" tall="h-[23px]" />
            <TableRows start={21} shares={rarocShares} scores={rarocScores} mid={36.5} />
            <EmptyRows from={34} to={35} />
            <TableHead start={36} title="Резерв/ОД" tall="h-[17px]" />
            <TableRows start={40} shares={reserveShares} scores={reserveScores} mid={65.5} />
            <EmptyRows from={53} to={55} />
          </tbody>
        </table>
        <ScoringPicture />
        <Callouts />
      </div>

      <div className="flex w-[17px] flex-col items-center border-l border-[#b5b5b5] pt-[3px]">
        <button aria-label="Вверх" className="flex size-[12px] items-center justify-center border border-[#c6c6c6] bg-white">
          <svg viewBox="0 0 6 4" className="h-[4px] w-[6px]" aria-hidden="true">
            <path d="M0 4h6L3 0z" fill="#555" />
          </svg>
        </button>
        <div className="flex w-[12px] flex-1 flex-col bg-[#d9d9d9] pt-[11px]">
          <div className="h-[250px] border border-[#ababab] bg-white" />
        </div>
        <button aria-label="Вниз" className="flex size-[12px] items-center justify-center border border-[#c6c6c6] bg-white">
          <svg viewBox="0 0 6 4" className="h-[4px] w-[6px]" aria-hidden="true">
            <path d="M0 0h6L3 4z" fill="#555" />
          </svg>
        </button>
      </div>
    </div>
  )
}

/* ---------- bottom bars ---------- */

function SheetTabs() {
  return (
    <div className="flex h-[20px] items-start border-t border-[#ababab] bg-[#e6e6e6] font-['Open_Sans',sans-serif] text-[11px] leading-[14px] text-[#555]">
      <div className="flex h-[17px] w-[68px] items-center gap-[15px] pl-[19px]">
        <button aria-label="Предыдущий лист">
          <svg viewBox="0 0 4 6" className="h-[6px] w-[4px]" aria-hidden="true">
            <path d="M4 0v6L0 3z" fill="#b5b5b5" />
          </svg>
        </button>
        <button aria-label="Следующий лист">
          <svg viewBox="0 0 4 6" className="h-[6px] w-[4px]" aria-hidden="true">
            <path d="M0 0v6l4-3z" fill="#b5b5b5" />
          </svg>
        </button>
      </div>
      {sheets.map((sheet) => (
        <button
          key={sheet}
          className={`h-[17px] pr-[9px] pl-[8px] whitespace-nowrap ${
            sheet === 'Оптимизация'
              ? 'border-b-2 border-[#217346] bg-white font-semibold text-[#217346]'
              : 'border-l border-[#b5b5b5]'
          }`}
        >
          {sheet}
        </button>
      ))}
      <button aria-label="Новый лист" className="mt-[2px] ml-[18px]">
        <svg viewBox="0 0 14 14" className="size-[14px]" fill="none" stroke="#666" aria-hidden="true">
          <circle cx="7" cy="7" r="6.300" />
          <path d="M7 4v6M4 7h6" strokeWidth="1.500" />
        </svg>
      </button>
      <div className="flex flex-1 items-center justify-end pt-[3px] pr-[17px]">
        <svg viewBox="0 0 2 10" className="mr-[10px] h-[10px] w-[2px]" fill="#999" aria-hidden="true">
          <path d="M0 0h2v2H0zM0 4h2v2H0zM0 8h2v2H0z" />
        </svg>
        <button aria-label="Влево" className="flex size-[12px] items-center justify-center bg-white">
          <svg viewBox="0 0 4 6" className="h-[6px] w-[4px]" aria-hidden="true">
            <path d="M4 0v6L0 3z" fill="#555" />
          </svg>
        </button>
        <div className="flex h-[12px] w-[460px] bg-[#d9d9d9] pr-[14px]">
          <div className="flex-1 border border-[#ababab] bg-white" />
        </div>
        <button aria-label="Вправо" className="flex size-[12px] items-center justify-center bg-white">
          <svg viewBox="0 0 4 6" className="h-[6px] w-[4px]" aria-hidden="true">
            <path d="M0 0v6l4-3z" fill="#555" />
          </svg>
        </button>
      </div>
    </div>
  )
}

function StatusBar() {
  return (
    <footer className="flex h-[15px] items-center border-t border-[#cfcfcf] bg-[#f1f1f1] pr-[6px] pl-[4px] font-['Open_Sans',sans-serif] text-[9px] text-[#444]">
      <span>Готово</span>
      <button aria-label="Запись макроса" className="ml-[12px]">
        <svg viewBox="0 0 10 10" className="size-[10px]" fill="none" stroke="#555" aria-hidden="true">
          <path d="M0.500 2.500h9v7h-9zM2.500 5.500h5M2.500 7.500h5" />
          <path d="M0.500 2.500h9" strokeWidth="2" />
          <circle cx="2.500" cy="2" r="1.500" fill="#555" />
        </svg>
      </button>
      <div className="flex flex-1 items-center justify-end">
        <button aria-label="Обычный" className="flex h-[14px] w-[27px] items-center justify-center bg-[#c6c6c6]">
          <svg viewBox="0 0 9 9" className="size-[9px]" fill="none" stroke="#555" aria-hidden="true">
            <path d="M0.500 0.500h8v8h-8zM0.500 3.200h8M0.500 5.800h8M3.200 0.500v8M5.800 0.500v8" />
          </svg>
        </button>
        <button aria-label="Разметка страницы" className="flex h-[14px] w-[27px] items-center justify-center">
          <svg viewBox="0 0 10 9" className="h-[9px] w-[10px]" fill="none" stroke="#555" aria-hidden="true">
            <path d="M0.500 0.500h9v8h-9zM3 2.500h4v4.500H3zM4 4h2M4 5.500h2" />
          </svg>
        </button>
        <button aria-label="Страничный режим" className="flex h-[14px] w-[27px] items-center justify-center">
          <svg viewBox="0 0 10 9" className="h-[9px] w-[10px]" fill="none" stroke="#555" aria-hidden="true">
            <path d="M0.500 0.500h9v8h-9zM3.500 0.500v4h3v-4" />
          </svg>
        </button>
        <button aria-label="Уменьшить" className="ml-[3px]">
          <svg viewBox="0 0 8 8" className="size-[8px]" stroke="#444" strokeWidth="1.600" aria-hidden="true">
            <path d="M0.500 4h7" />
          </svg>
        </button>
        <input
          type="range"
          aria-label="Масштаб"
          defaultValue={25}
          className="mx-[3px] h-[9px] w-[84px] appearance-none bg-transparent [&::-webkit-slider-runnable-track]:h-[9px] [&::-webkit-slider-runnable-track]:bg-[linear-gradient(#b5b5b5,#b5b5b5)] [&::-webkit-slider-runnable-track]:bg-[length:100%_1px] [&::-webkit-slider-runnable-track]:bg-center [&::-webkit-slider-runnable-track]:bg-no-repeat [&::-webkit-slider-thumb]:h-[9px] [&::-webkit-slider-thumb]:w-[4px] [&::-webkit-slider-thumb]:appearance-none [&::-webkit-slider-thumb]:bg-[#555]"
        />
        <button aria-label="Увеличить">
          <svg viewBox="0 0 8 8" className="size-[8px]" stroke="#444" strokeWidth="1.600" aria-hidden="true">
            <path d="M0.500 4h7M4 0.500v7" />
          </svg>
        </button>
        <span className="w-[27px] text-right">54%</span>
      </div>
    </footer>
  )
}

export default function App() {
  return (
    <div className={`relative flex min-h-screen flex-col bg-[#f1f1f1] ${UI}`}>
      <TitleBar />
      <Ribbon />
      <FormulaBar />
      <Sheet />
      <SheetTabs />
      <StatusBar />
      <div className="pointer-events-none absolute right-[53px] bottom-[28px] w-[280px] font-['Open_Sans',sans-serif] whitespace-nowrap text-[#a8a8a8] opacity-80">
        <p className="text-[16px] leading-[20px]">Активация Windows</p>
        <p className="text-[11px] leading-[17px]">Чтобы активировать Windows, перейдите в раздел</p>
        <p className="text-[11px] leading-[17px]">"Параметры".</p>
      </div>
    </div>
  )
}
